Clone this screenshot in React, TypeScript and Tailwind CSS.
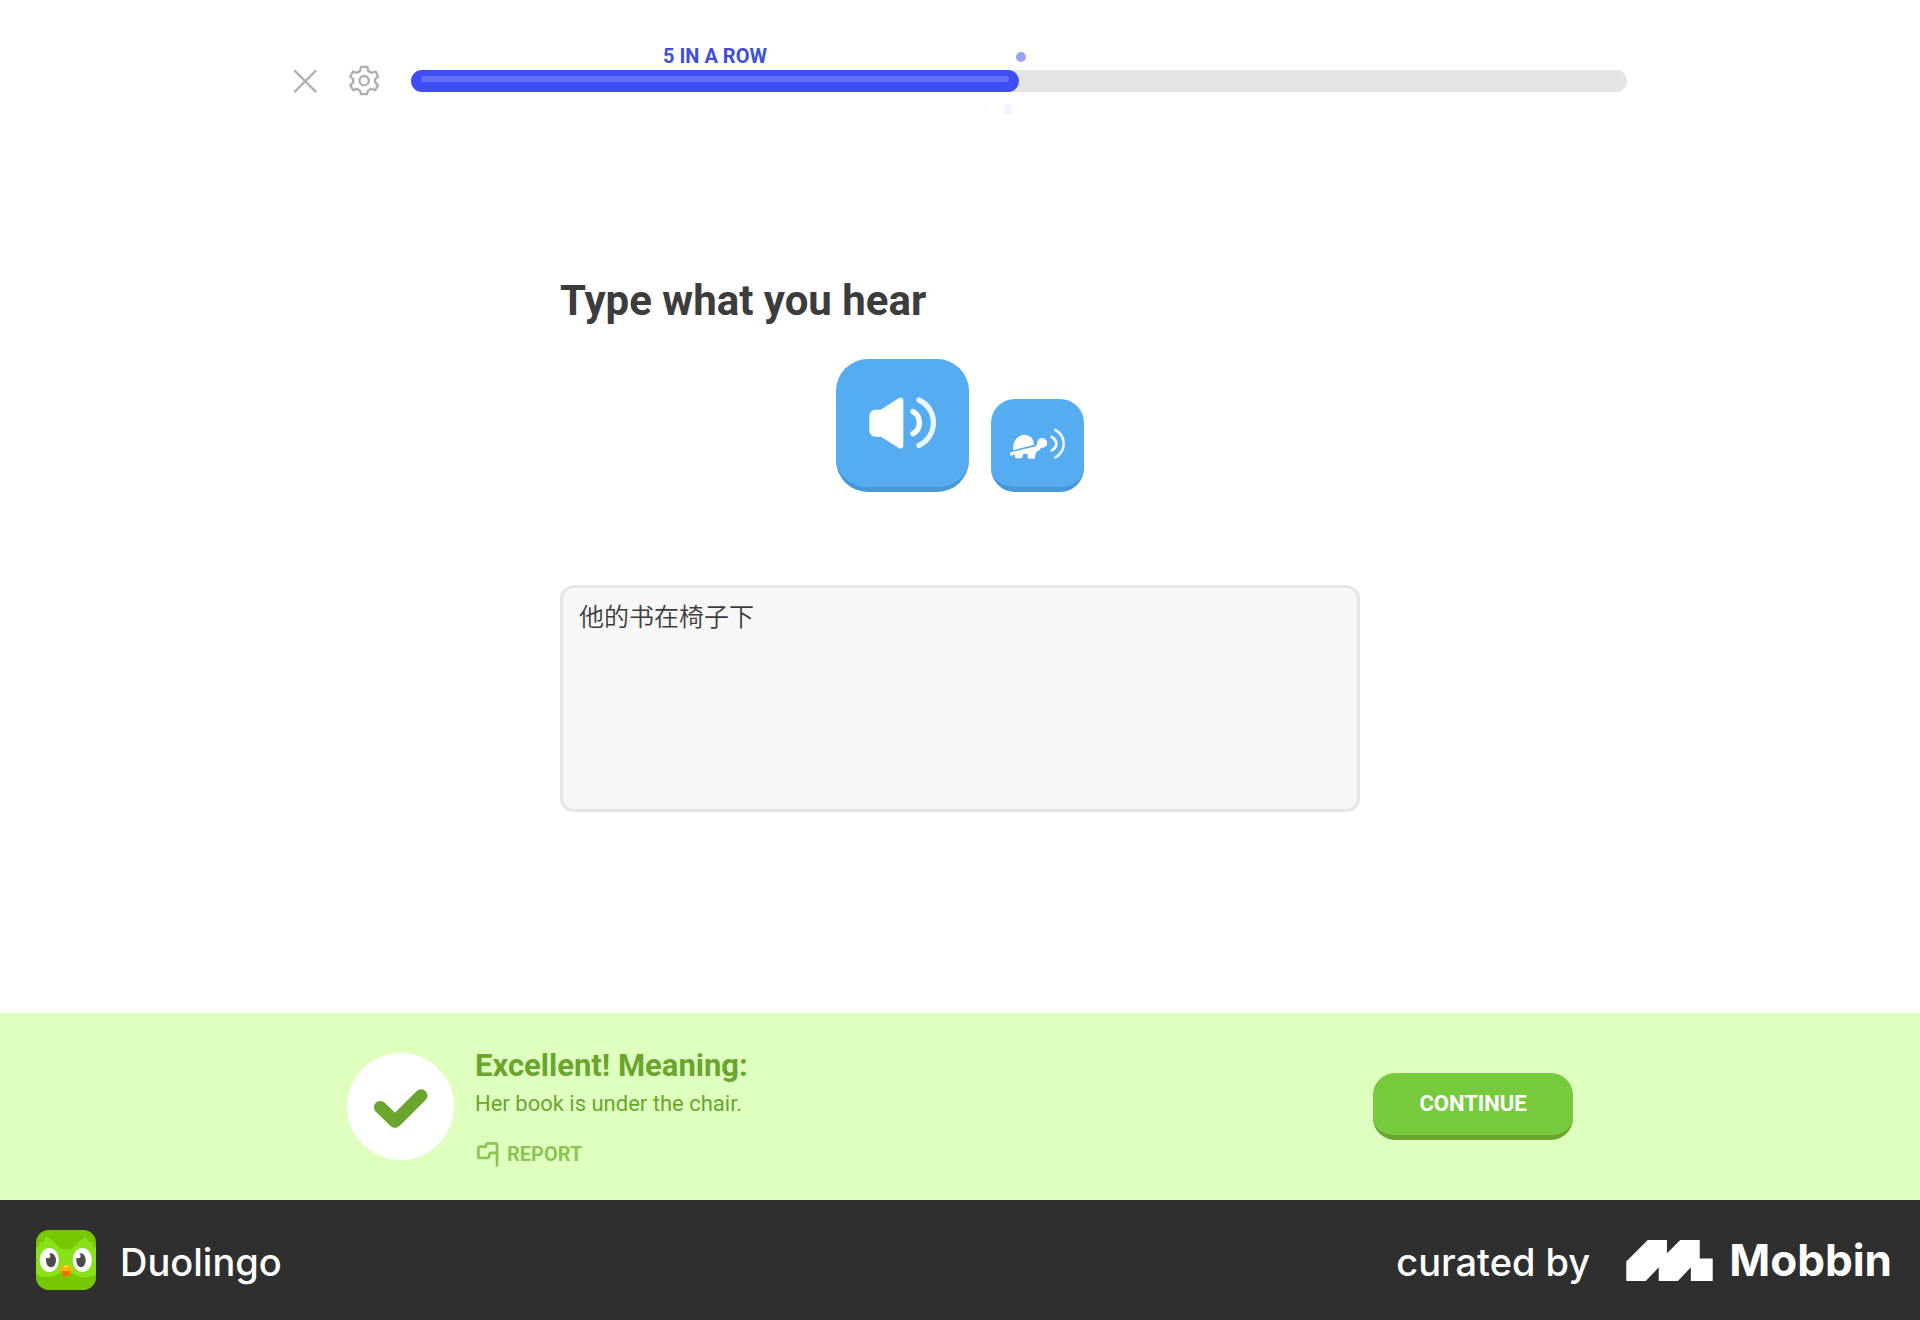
import { useState } from "react";

const sans = "font-['Roboto','Noto_Sans_CJK_SC',sans-serif]";

function CloseIcon() {
  return (
    <svg viewBox="0 0 24 24" className="size-6" fill="none" stroke="#afafaf" strokeWidth="2.400" strokeLinecap="round" aria-hidden="true">
      <path d="M2 2l20.500 20.500M22.500 2L2 22.500" />
    </svg>
  );
}

function GearIcon() {
  return (
    <svg viewBox="205 108 90 92" className="h-[31px] w-[30px]" fill="none" stroke="#afafaf" strokeWidth="7" strokeLinejoin="round" aria-hidden="true">
      <path d="M241 113h19l3 13q5 2 9 5l13-4 7 15-9 9q1 4 0 8l9 9-8 15-13-4q-4 3-9 5l-3 11h-18l-3-11q-5-2-9-5l-12 4-8-15 9-9q-1-4 0-8l-9-9 8-15 12 4q4-3 9-5z" />
      <circle cx="250.500" cy="154.500" r="14" />
    </svg>
  );
}

function SpeakerIcon() {
  return (
    <svg viewBox="146 171 201 156" className="h-[52px] w-[67px]" aria-hidden="true">
      <path fill="#fff" d="M165 209h16l54-34q6-4 10-1 4 2 4 7v136q0 6-4 8-5 2-10-1l-53-34h-17q-8 0-13-6-5-5-5-13v-43q0-8 5-13 5-6 13-6z" />
      <g fill="none" stroke="#fff" strokeWidth="16" strokeLinecap="round">
        <path d="M278 215a38 38 0 0 1 0 66" />
        <path stroke="#eaf6ff" d="M296 180a75 75 0 0 1 0 136" />
      </g>
    </svg>
  );
}

function TurtleIcon() {
  return (
    <svg viewBox="565 261 171 93" className="h-[31px] w-[57px]" aria-hidden="true">
      <g fill="#fff">
        <path d="M578 328q-3-17 6-31 9-14 25-16 13-1 22 8 10 10 9 22z" />
        <path d="M570 334l76-18q4-7 4-12 2-13 14-13 10 0 14 8 4 10-2 17-4 4-10 4l-5 1q-4 8-15 13l-3 15q-1 4-5 4h-13q-4 0-4-5v-9h-13l-3 10q-1 3-5 3h-12q-4 0-5-5l-1-7-10 4q-4 1-4-4 0-4 2-6z" />
      </g>
      <g fill="none" stroke="#fff" strokeWidth="8" strokeLinecap="round">
        <path d="M693 288q14 8 14 20t-14 20" />
        <path stroke="#e4f3ff" d="M704 267q25 14 25 41t-25 41" />
      </g>
    </svg>
  );
}

function FlagIcon() {
  return (
    <svg viewBox="0 0 22 25" className="h-[25px] w-[22px]" fill="none" stroke="#8ec356" strokeWidth="2.700" strokeLinecap="round" strokeLinejoin="round" aria-hidden="true">
      <path d="M20 23.500V3q0-1.600-1.600-1.600H10.800q-1.300 0-1.600 1.300L8.800 4.600H3q-1.600 0-1.600 1.600v8.200q0 1.600 1.600 1.600h7.300q1.200 0 1.500-1.200l.9-3q.3-1 1.300-1h6" />
    </svg>
  );
}

function OwlIcon() {
  return (
    <svg viewBox="0 0 180 180" className="size-[60px]" aria-hidden="true">
      <rect width="180" height="180" rx="38" fill="#78c800" />
      <path fill="#89e219" d="M0 56l8-8 2-14 8 5 7-7 4-13q18 8 43 37 18 4 36 0 20-25 42-36l5 13 8 5 6-5 1 14 10 8v77q-12 10-38 10-20 0-32-14-20 8-40 0-14 14-32 14-22 0-38-10z" />
      <ellipse cx="40" cy="90" rx="29" ry="36" fill="#fff" />
      <ellipse cx="139" cy="90" rx="29" ry="36" fill="#fff" />
      <ellipse cx="45" cy="91" rx="15" ry="21" fill="#4b4b4b" />
      <ellipse cx="135" cy="91" rx="14" ry="21" fill="#4b4b4b" />
      <circle cx="36" cy="78" r="7" fill="#fff" />
      <circle cx="127" cy="78" r="7" fill="#fff" />
      <path fill="#f47000" d="M75 118h30l-3 15q-2 6-8 6h-8q-6 0-8-6z" />
      <path fill="#ffb100" d="M70 116q8-12 20-12t20 12q2 7-5 7H75q-7 0-5-7z" />
      <ellipse cx="90" cy="110" rx="8" ry="4" fill="#ffd040" />
    </svg>
  );
}

function MobbinMark() {
  return (
    <svg viewBox="717 90 253 120" className="h-[41px] w-[87px]" fill="#fff" aria-hidden="true">
      <path d="M780 90h56v39l39-39h57v54h38v66h-64v-40l-38 40h-56v-40l-38 40h-57v-57z" />
    </svg>
  );
}

export default function App() {
  const [answer, setAnswer] = useState("他的书在椅子下");
  const progress = 50;

  return (
    <div className={`flex min-h-screen flex-col bg-white ${sans}`}>
      <header className="mx-auto flex w-full max-w-[1334px] items-center pt-[65px]">
        <button type="button" aria-label="Quit lesson">
          <CloseIcon />
        </button>
        <button type="button" aria-label="Settings" className="ml-8">
          <GearIcon />
        </button>
        <div
          role="progressbar"
          aria-label="Lesson progress"
          aria-valuenow={progress}
          aria-valuemin={0}
          aria-valuemax={100}
          className="ml-8 h-[22px] flex-1 rounded-full bg-[#e5e5e5]"
        >
          <div className="relative h-full rounded-full bg-[#3f4df4] px-[10px] pt-[6px]" style={{ width: `${progress}%` }}>
            <div className="h-[6px] rounded-full bg-[#6670f7]" />
            <p className="absolute inset-x-0 bottom-full text-center text-[20px] leading-[28px] font-bold text-[#3f4de0]">5 IN A ROW</p>
            <span className="absolute -top-[18px] -right-[7px] size-[10px] rounded-full bg-[#9a9ff8]" />
            <span className="absolute -bottom-[22px] right-[6px] size-[10px] rounded-full bg-[#f2f2fe]" />
            <span className="absolute -bottom-[18px] right-[32px] size-[2px] rounded-full bg-[#f2f2fe]" />
          </div>
        </div>
      </header>

      <main className="mx-auto flex w-full max-w-[800px] flex-1 flex-col justify-center pb-5">
        <h1 className="text-[42px] leading-[48px] font-bold text-[#3c3c3c]">Type what you hear</h1>
        <div className="mt-[34px] flex items-end justify-center gap-[22px]">
          <button type="button" aria-label="Play audio" className="flex size-[133px] items-center justify-center rounded-[32px] border-b-[5px] border-[#4798d8] bg-[#55acf0]">
            <SpeakerIcon />
          </button>
          <button type="button" aria-label="Play audio slowly" className="flex size-[93px] items-center justify-center rounded-[24px] border-b-[5px] border-[#4798d8] bg-[#55acf0]">
            <TurtleIcon />
          </button>
        </div>
        <textarea
          aria-label="Type what you hear"
          value={answer}
          onChange={(e) => setAnswer(e.target.value)}
          className="mt-[93px] h-[227px] w-full resize-none rounded-[14px] border-[3px] border-[#e5e5e5] bg-[#f7f7f7] px-4 py-3 text-[25px] leading-[36px] font-[350] text-[#3c3c3c] outline-none"
        />
      </main>

      <section className="bg-[#dfffbf] py-[30px]">
        <div className="mx-auto flex w-full max-w-[1226px] items-center">
          <div className="flex size-[107px] items-center justify-center rounded-full bg-white">
            <svg viewBox="129 271 163 117" className="mt-1 h-[39px] w-[54px]" fill="none" stroke="#6aa52e" strokeWidth="38" strokeLinecap="round" strokeLinejoin="round" aria-hidden="true">
              <path d="M148 325.500l44.500 43.500L271.500 290.500" />
            </svg>
          </div>
          <div className="ml-[21px] pt-[3px]">
            <h2 className="text-[31px] leading-[40px] font-bold text-[#6aa52e]">Excellent! Meaning:</h2>
            <p className="text-[22px] leading-[36px] text-[#6aa52e]">Her book is under the chair.</p>
            <button type="button" className="mt-4 flex h-8 items-center gap-2 pl-0.5 text-[20px] leading-[28px] font-bold text-[#8ec356]">
              <FlagIcon />
              REPORT
            </button>
          </div>
          <button type="button" className="ml-auto h-[67px] w-[200px] rounded-[22px] border-b-[5px] border-[#6aa52e] bg-[#78ca3d] text-[22px] leading-[28px] font-bold text-white">
            CONTINUE
          </button>
        </div>
      </section>

      <footer className="flex h-[120px] items-center justify-between bg-[#2f2f2f] pr-7 pl-9 font-['Inter',sans-serif] text-white">
        <div className="flex items-center gap-6">
          <OwlIcon />
          <span className="pt-1 text-[38px] leading-[48px] font-medium">Duolingo</span>
        </div>
        <div className="flex items-center">
          <span className="pt-1 text-[38px] leading-[48px] font-medium">curated by</span>
          <span className="ml-9">
            <MobbinMark />
          </span>
          <span className="ml-4 text-[44px] leading-[48px] font-bold">Mobbin</span>
        </div>
      </footer>
    </div>
  );
}
